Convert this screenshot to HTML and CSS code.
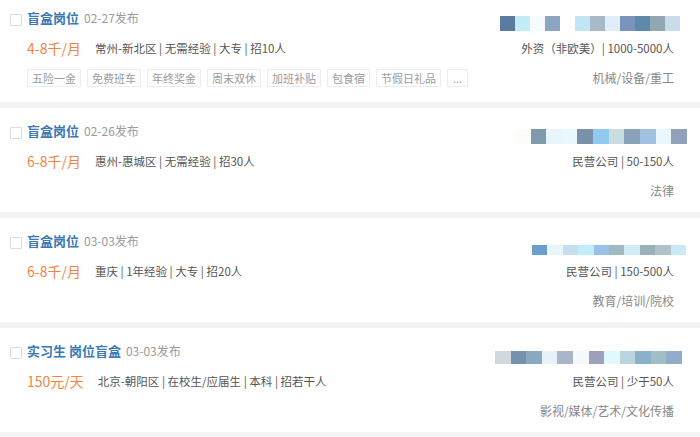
FILE: index.html
```html
<!DOCTYPE html>
<html lang="zh-CN">
<head>
<meta charset="utf-8">
<title>职位列表</title>
<link rel="stylesheet" href="styles.css">
</head>
<body>
<div class="list">
  <div class="card">
    <div class="left">
      <div class="row head"><span class="check"></span><span class="title">盲盒岗位</span><span class="date">02-27发布</span></div>
      <div class="row"><span class="salary">4-8千/月</span><span class="info">常州-新北区 | 无需经验 | 大专 | 招10人</span></div>
      <div class="row tags"><span class="tag">五险一金</span><span class="tag">免费班车</span><span class="tag">年终奖金</span><span class="tag">周末双休</span><span class="tag">加班补贴</span><span class="tag">包食宿</span><span class="tag">节假日礼品</span><span class="tag more">...</span></div>
    </div>
    <div class="right">
      <div class="row blurrow"><span class="blur b1"></span></div>
      <div class="row comp">外资（非欧美）| 1000-5000人</div>
      <div class="row ind">机械/设备/重工</div>
    </div>
  </div>
  <div class="card">
    <div class="left">
      <div class="row head"><span class="check"></span><span class="title">盲盒岗位</span><span class="date">02-26发布</span></div>
      <div class="row"><span class="salary">6-8千/月</span><span class="info">惠州-惠城区 | 无需经验 | 招30人</span></div>
      <div class="row"></div>
    </div>
    <div class="right">
      <div class="row blurrow"><span class="blur b2"></span></div>
      <div class="row comp">民营公司 | 50-150人</div>
      <div class="row ind">法律</div>
    </div>
  </div>
  <div class="card">
    <div class="left">
      <div class="row head"><span class="check"></span><span class="title">盲盒岗位</span><span class="date">03-03发布</span></div>
      <div class="row"><span class="salary">6-8千/月</span><span class="info">重庆 | 1年经验 | 大专 | 招20人</span></div>
      <div class="row"></div>
    </div>
    <div class="right">
      <div class="row blurrow"><span class="blur b3"></span></div>
      <div class="row comp">民营公司 | 150-500人</div>
      <div class="row ind">教育/培训/院校</div>
    </div>
  </div>
  <div class="card">
    <div class="left">
      <div class="row head"><span class="check"></span><span class="title">实习生 岗位盲盒</span><span class="date">03-03发布</span></div>
      <div class="row"><span class="salary">150元/天</span><span class="info">北京-朝阳区 | 在校生/应届生 | 本科 | 招若干人</span></div>
      <div class="row"></div>
    </div>
    <div class="right">
      <div class="row blurrow"><span class="blur b4"></span></div>
      <div class="row comp">民营公司 | 少于50人</div>
      <div class="row ind">影视/媒体/艺术/文化传播</div>
    </div>
  </div>
</div>
</body>
</html>
```

FILE: styles.css
```css
html, body {
  margin: 0;
  padding: 0;
  background: #f3f3f3;
  font-family: "Noto Sans CJK SC", "Noto Sans", sans-serif;
  overflow: hidden;
}
.list {
  display: flex;
  flex-direction: column;
  gap: 6px;
  margin-top: -5px;
}
.card {
  background: #fff;
  height: 104px;
  box-sizing: border-box;
  padding: 13px 26px 0 10px;
  display: flex;
  justify-content: space-between;
}
.card:first-child {
  height: 107px;
}
.left, .right {
  display: flex;
  flex-direction: column;
  gap: 10px;
}
.right {
  align-items: flex-end;
}
.row {
  height: 20px;
  line-height: 20px;
  display: flex;
  align-items: center;
  white-space: nowrap;
}
.left .row {
  padding-left: 17px;
}
.left .row.head {
  padding-left: 0;
}
.check {
  width: 10px;
  height: 10px;
  border: 1px solid #dcdcdc;
  border-radius: 1px;
  margin-right: 5px;
  margin-top: 4px;
  background: #fff;
}
.title {
  font-size: 13px;
  font-weight: 700;
  color: #3b78b4;
  margin-right: 5px;
}
.date {
  font-size: 12px;
  color: #9a9a9a;
}
.salary {
  font-size: 14px;
  color: #f0853f;
  margin-right: 14px;
}
.info {
  font-size: 11.5px;
  color: #555;
}
.tags {
  gap: 6px;
}
.tag {
  font-size: 11px;
  color: #9c9c9c;
  height: 16px;
  line-height: 16px;
  padding: 0 4px;
  border: 1px solid #ececec;
  border-radius: 1px;
}
.tag.more {
  padding: 0 5px;
}
.comp {
  font-size: 11.5px;
  color: #555;
}
.ind {
  font-size: 12px;
  color: #888;
}
.blurrow {
  align-items: flex-end;
}
.blur {
  display: block;
  margin-bottom: -3px;
}
.b1 {
  width: 180px;
  height: 15px;
  margin-right: -6px;
  background: linear-gradient(90deg,
    #5b7ba2 0 15px, #c3ecf6 15px 30px, #f6fbfd 30px 45px, #8ba6c2 45px 60px,
    #ffffff 60px 75px, #bfe6f2 75px 90px, #aab9c6 90px 105px, #e1eef8 105px 120px,
    #7a93ba 120px 135px, #5f89aa 135px 150px, #91a8b2 150px 165px, #c9dcea 165px 180px);
}
.b2 {
  width: 172px;
  height: 15px;
  margin-right: -13px;
  background: linear-gradient(90deg,
    #fcfcfa 0 16px, #7f99ad 16px 31px, #e6f6fa 31px 47px, #e9f8fc 47px 62px,
    #7991a9 62px 78px, #92c9f1 78px 94px, #c9dde1 94px 109px, #89a1b9 109px 125px,
    #a1c1e1 125px 141px, #e9f8fc 141px 156px, #91a1b9 156px 172px);
}
.b3 {
  width: 154px;
  height: 10px;
  margin-right: -12px;
  margin-bottom: -4px;
  background: linear-gradient(90deg,
    #6b9dcd 0 15px, #e9f5fb 15px 31px, #c9ddf1 31px 46px, #c1edf9 46px 62px,
    #99c1e9 62px 77px, #a1b9c1 77px 92px, #d1edf5 92px 108px, #99b1b9 108px 123px,
    #b1c1c9 123px 139px, #c9e9f5 139px 154px);
}
.b4 {
  width: 187px;
  height: 13px;
  margin-right: -8px;
  background: linear-gradient(90deg,
    #d1d9dd 0 16px, #7991b1 16px 31px, #89a9c1 31px 47px, #e9f1f9 47px 62px,
    #a9b5c9 62px 78px, #f5f9fd 78px 94px, #9da1b9 94px 109px, #e1f9fd 109px 125px,
    #b9d5dd 125px 140px, #89b1c9 140px 156px, #a1bdc5 156px 171px, #91adc9 171px 187px);
}
```
